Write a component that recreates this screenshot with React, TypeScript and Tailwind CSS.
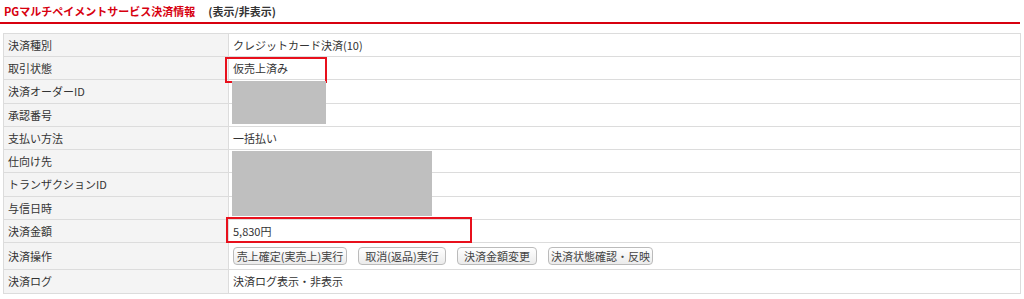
const rows: { label: string; value?: string; h: number; buttons?: boolean }[] = [
  { label: "決済種別", value: "クレジットカード決済(10)", h: 23 },
  { label: "取引状態", value: "仮売上済み", h: 23 },
  { label: "決済オーダーID", h: 24 },
  { label: "承認番号", h: 23 },
  { label: "支払い方法", value: "一括払い", h: 23 },
  { label: "仕向け先", h: 23 },
  { label: "トランザクションID", h: 24 },
  { label: "与信日時", h: 23 },
  { label: "決済金額", value: "5,830円", h: 23 },
  { label: "決済操作", h: 27, buttons: true },
  { label: "決済ログ", value: "決済ログ表示・非表示", h: 24 },
];

const actions = [
  { text: "売上確定(実売上)実行", w: "w-[114px]" },
  { text: "取消(返品)実行", w: "w-[88px]" },
  { text: "決済金額変更", w: "w-[80px]" },
  { text: "決済状態確認・反映", w: "w-[105px]" },
];

export default function App() {
  return (
    <div
      className="w-[1024px] h-[299px] bg-white text-[#333] overflow-hidden"
      style={{ fontFamily: '"Noto Sans CJK JP", "Noto Sans", sans-serif' }}
    >
      <div className="h-[22px] flex items-center pl-[4px] text-[11px] font-bold">
        <span className="text-[#d7000f]">PGマルチペイメントサービス決済情報</span>
        <span className="ml-[13px] text-[#333]">(表示/非表示)</span>
      </div>
      <div className="h-[2px] w-[1020px] bg-[#d7000f]" />

      <div className="relative mt-[9px] ml-[3px] w-[1018px] border-t border-l border-r border-[#dcdcdc] text-[11px]">
        {rows.map((r) => (
          <div key={r.label} className="flex border-b border-[#dcdcdc]" style={{ height: r.h }}>
            <div className="w-[225px] shrink-0 bg-[#f4f4f4] border-r border-[#dcdcdc] flex items-center pl-[4px]">
              {r.label}
            </div>
            <div className="flex-1 flex items-center pl-[4px] gap-[11px]">
              {r.buttons
                ? actions.map((a) => (
                    <button
                      key={a.text}
                      className={`${a.w} h-[18px] rounded-[4px] border border-[#bbb] bg-gradient-to-b from-white to-[#ebebeb] text-[11px] text-[#444] leading-none`}
                    >
                      {a.text}
                    </button>
                  ))
                : r.value}
            </div>
          </div>
        ))}

        {/* annotations over the table */}
        <div className="absolute left-[221px] top-[23px] w-[102px] h-[26px] border-2 border-[#e8101c]" />
        <div className="absolute left-[228px] top-[47px] w-[94px] h-[43px] bg-[#bfbfbf]" />
        <div className="absolute left-[228px] top-[117px] w-[200px] h-[65px] bg-[#bfbfbf]" />
        <div className="absolute left-[222px] top-[183px] w-[246px] h-[26px] border-2 border-[#e8101c]" />
      </div>
    </div>
  );
}
